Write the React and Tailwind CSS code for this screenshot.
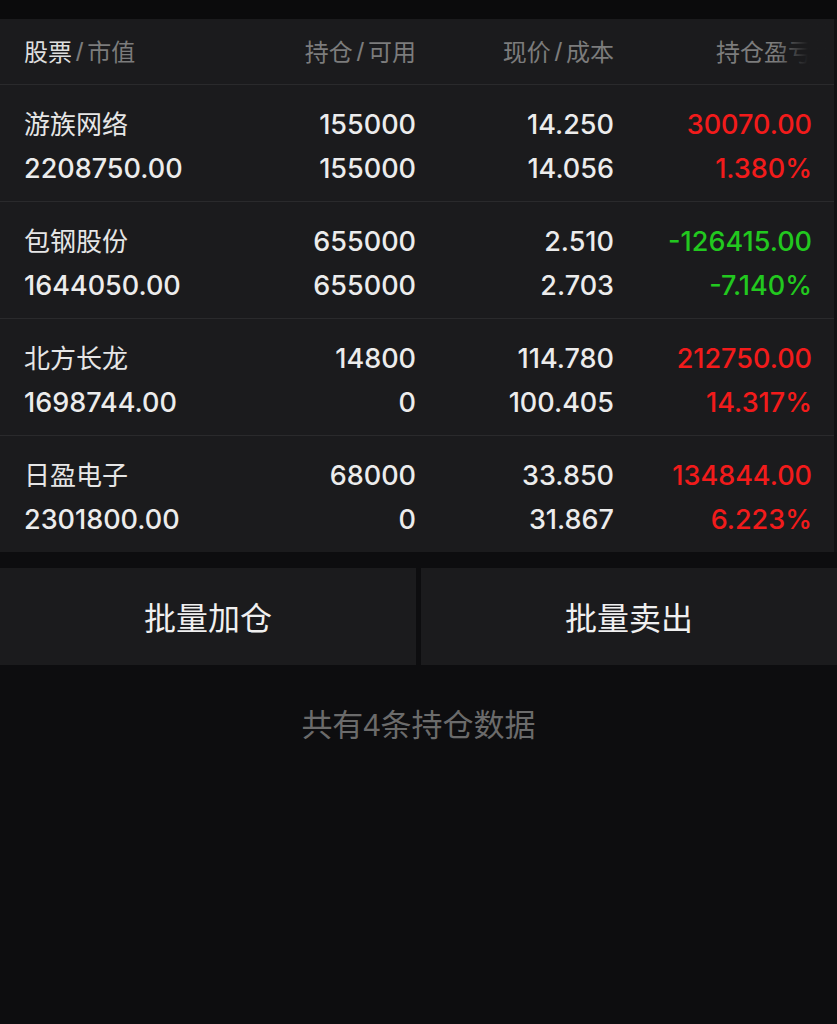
import React from "react";

const rows = [
  { name: "游族网络", value: "2208750.00", hold: "155000", avail: "155000", price: "14.250", cost: "14.056", pl: "30070.00", pct: "1.380%", up: true },
  { name: "包钢股份", value: "1644050.00", hold: "655000", avail: "655000", price: "2.510", cost: "2.703", pl: "-126415.00", pct: "-7.140%", up: false },
  { name: "北方长龙", value: "1698744.00", hold: "14800", avail: "0", price: "114.780", cost: "100.405", pl: "212750.00", pct: "14.317%", up: true },
  { name: "日盈电子", value: "2301800.00", hold: "68000", avail: "0", price: "33.850", cost: "31.867", pl: "134844.00", pct: "6.223%", up: true },
];

const font = { fontFamily: '"Liberation Sans", "Noto Sans CJK SC", sans-serif' };
const num = { fontFamily: 'Inter, "Liberation Sans", sans-serif' };

function Slash() {
  return <span className="px-[4px] text-[26px]">/</span>;
}

export default function App() {
  return (
    <div className="w-[837px] min-h-[1024px] bg-[#0d0d0f]" style={font}>
      <div className="h-[19px] bg-[#0b0b0c]" />
      <div className="bg-[#1b1b1d] border-r-[3px] border-[#111113]">
        <div className="relative grid grid-cols-[194px_198px_198px_198px] items-center h-[66px] pl-[24px] pt-[2px] border-b border-[#2a2a2c] text-[24px] text-[#7c7c7c]">
          <div><span className="text-[#dedede]">股票</span><Slash />市值</div>
          <div className="text-right">持仓<Slash />可用</div>
          <div className="text-right">现价<Slash />成本</div>
          <div className="text-right">持仓盈亏</div>
          <div className="absolute right-0 top-0 h-full w-[58px] bg-gradient-to-r from-transparent to-[#1b1b1d] to-[55%]" />
        </div>
        {rows.map((r, i) => (
          <div
            key={i}
            className={`grid grid-cols-[194px_198px_198px_198px] pl-[24px] pt-[18px] pb-[10px] leading-[44px] ${i < rows.length - 1 ? "border-b border-[#2a2a2c]" : ""}`}
          >
            <div>
              <div className="text-[26px] text-[#e6e6e6]">{r.name}</div>
              <div className="text-[27px] font-medium text-[#ececec]" style={num}>{r.value}</div>
            </div>
            <div className="text-right text-[27px] font-medium text-[#ececec]" style={num}>
              <div>{r.hold}</div>
              <div>{r.avail}</div>
            </div>
            <div className="text-right text-[27px] font-medium text-[#ececec]" style={num}>
              <div>{r.price}</div>
              <div>{r.cost}</div>
            </div>
            <div className={`text-right text-[27px] font-medium ${r.up ? "text-[#f21b1b]" : "text-[#22c81f]"}`} style={num}>
              <div>{r.pl}</div>
              <div>{r.pct}</div>
            </div>
          </div>
        ))}
      </div>
      <div className="mt-[16px] flex gap-[5px] h-[97px]">
        <button className="flex-1 bg-[#1b1b1d] text-[32px] text-[#f0f0f0] pt-[4px]">批量加仓</button>
        <button className="flex-1 bg-[#1b1b1d] text-[32px] text-[#f0f0f0] pt-[4px]">批量卖出</button>
      </div>
      <div className="mt-[38px] text-center text-[31px] text-[#6b6b6b]">共有4条持仓数据</div>
    </div>
  );
}
